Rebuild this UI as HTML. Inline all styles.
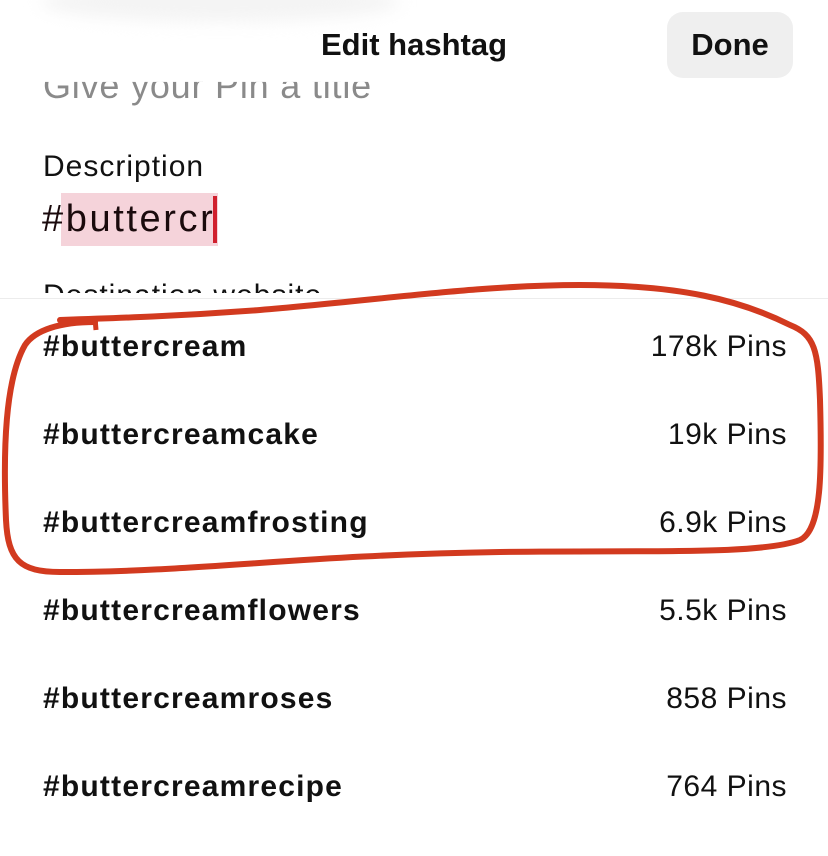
<!DOCTYPE html>
<html><head><meta charset="utf-8"><style>
html,body{margin:0;padding:0;width:828px;height:855px;overflow:hidden;background:#fff;font-family:"Liberation Sans",sans-serif;color:#111;}
.abs{position:absolute;white-space:nowrap;}
.row{position:absolute;left:43px;right:41px;height:40px;font-size:30px;}
.row b{position:absolute;left:0;top:0;letter-spacing:1.2px;}
.row span{position:absolute;right:0;top:0;color:#111;letter-spacing:0.5px;}
</style></head><body>
<div class="abs" style="left:43px;top:65px;font-size:36px;color:#8a8a8a;letter-spacing:0.8px;clip-path:inset(16px 0 0 0);">Give your Pin a title</div>
<div class="abs" style="left:0;top:0;width:828px;height:82px;background:linear-gradient(#fff 85%,rgba(255,255,255,0.9));"></div>
<div class="abs" style="top:-18px;width:360px;height:40px;border-radius:50%;background:#f4f4f4;filter:blur(8px);left:40px;"></div>
<div class="abs" style="left:0;width:828px;top:27px;text-align:center;font-size:31px;font-weight:bold;">Edit hashtag</div>
<div class="abs" style="left:667px;top:12px;width:126px;height:66px;border-radius:16px;background:#efefef;font-size:31px;font-weight:bold;text-align:center;line-height:66px;">Done</div>
<div class="abs" style="left:43px;top:150px;font-size:30px;letter-spacing:1px;">Description</div>
<div class="abs" style="left:61px;top:193px;width:157px;height:53px;background:#f5d3da;"></div>
<div class="abs" style="left:42px;top:198px;font-size:38px;color:#1a0a0c;letter-spacing:2.6px;">#buttercr</div>
<div class="abs" style="left:213px;top:196px;width:4px;height:47px;background:#d0202e;"></div>
<div class="abs" style="left:43px;top:279px;font-size:30px;letter-spacing:1px;clip-path:inset(0 0 20px 0);">Destination website</div>
<div class="abs" style="left:0;top:298px;width:828px;height:557px;background:#fff;border-top:1px solid #ececec;"></div>
<div class="row" style="top:330px"><b>#buttercream</b><span>178k Pins</span></div>
<div class="row" style="top:418px"><b>#buttercreamcake</b><span>19k Pins</span></div>
<div class="row" style="top:506px"><b>#buttercreamfrosting</b><span>6.9k Pins</span></div>
<div class="row" style="top:594px"><b>#buttercreamflowers</b><span>5.5k Pins</span></div>
<div class="row" style="top:682px"><b>#buttercreamroses</b><span>858 Pins</span></div>
<div class="row" style="top:770px"><b>#buttercreamrecipe</b><span>764 Pins</span></div>
<svg class="abs" style="left:0;top:0" width="828" height="855">
<path d="M95 322 C60 322 35 330 25 345 C5 380 3 450 6 520 C8 560 20 572 60 572 C200 572 300 555 500 552 C650 550 760 555 800 540 C822 530 822 470 820 400 C818 350 815 335 790 325 C740 300 680 285 580 285 C480 285 380 300 260 310 C180 316 120 318 60 320" fill="none" stroke="#d23a1f" stroke-width="6" stroke-linecap="round"/>
<path d="M95 318 L96 330" stroke="#d23a1f" stroke-width="5"/>
</svg>
</body></html>
